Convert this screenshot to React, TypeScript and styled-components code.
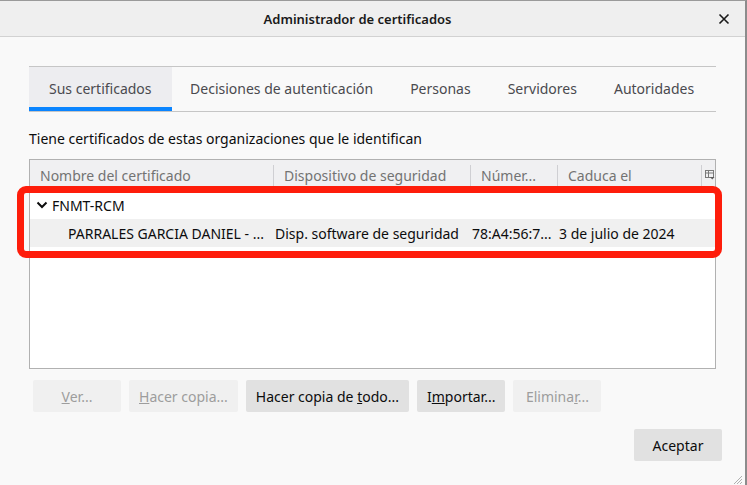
import React from "react";
import styled, { createGlobalStyle } from "styled-components";

const GlobalStyle = createGlobalStyle`
  html, body {
    margin: 0;
    padding: 0;
    background: #f9f9f9;
  }
  body {
    font-family: "Noto Sans", "Open Sans", sans-serif;
    font-size: 14px;
    color: #0c0c0d;
  }
`;

const Window = styled.div`
  position: relative;
  width: 747px;
  height: 485px;
  box-sizing: border-box;
  border-top: 1px solid #9a9a9a;
  border-right: 2px solid #8c8c8c;
  background: #f9f9f9;
  display: flex;
  flex-direction: column;
  overflow: hidden;
`;

const TitleBar = styled.div`
  height: 35px;
  flex: none;
  background: #efefef;
  border-bottom: 1px solid #d2d2d2;
  display: flex;
  align-items: center;
  justify-content: center;
  padding-right: 30px;
  position: relative;
`;

const Title = styled.span`
  font-size: 13px;
  font-weight: 600;
  color: #1a1a1a;
`;

const CloseButton = styled.button`
  position: absolute;
  right: 14px;
  top: 11px;
  width: 14px;
  height: 14px;
  border: none;
  padding: 0;
  background: none;
  display: flex;
`;

const Content = styled.div`
  flex: 1;
  padding: 29px 29px 0 29px;
  display: flex;
  flex-direction: column;
`;

const TabStrip = styled.div`
  display: flex;
  border-top: 1px solid #c6c6c6;
  border-bottom: 1px solid #c6c6c6;
`;

const Tab = styled.div<{ $selected?: boolean }>`
  flex: none;
  height: 44px;
  box-sizing: border-box;
  padding: 0 ${(p) => (p.$selected ? "20px" : "18.5px")} 2px;
  display: flex;
  align-items: center;
  white-space: nowrap;
  color: #4a4a4f;
  font-size: 14px;
  background: ${(p) => (p.$selected ? "#ededf0" : "transparent")};
  box-shadow: ${(p) => (p.$selected ? "inset 0 -4px 0 #0a84ff" : "none")};
`;

const Label = styled.div`
  margin-top: 17px;
  line-height: 20px;
  font-size: 14px;
`;

const Tree = styled.div`
  margin-top: 10px;
  height: 210px;
  box-sizing: border-box;
  border: 1px solid #b1b1b1;
  background: #ffffff;
  display: flex;
  flex-direction: column;
`;

const columns = "243px 197px 87px 144px 1fr";

const HeaderRow = styled.div`
  display: grid;
  grid-template-columns: ${columns};
  height: 30px;
  background: #f0f0f2;
  border-bottom: 1px solid #d7d7db;
`;

const HeaderCell = styled.div<{ $first?: boolean }>`
  display: flex;
  align-items: center;
  padding-left: ${(p) => (p.$first ? "10px" : "11px")};
  color: #737373;
  font-size: 14px;
  white-space: nowrap;
  overflow: hidden;
  position: relative;
  &::before {
    content: ${(p) => (p.$first ? "none" : "''")};
    position: absolute;
    left: 0;
    top: 5px;
    bottom: 4px;
    width: 1px;
    background: #cfcfd3;
  }
`;

const PickerCell = styled(HeaderCell)`
  padding-left: 4px;
`;

const Row = styled.div<{ $shaded?: boolean }>`
  display: grid;
  grid-template-columns: ${columns};
  height: 28px;
  align-items: center;
  background: ${(p) => (p.$shaded ? "#f0f0f0" : "#ffffff")};
  font-size: 14px;
  white-space: nowrap;
`;

const Cell = styled.div<{ $indent?: number }>`
  padding-left: ${(p) => p.$indent ?? 2}px;
  overflow: hidden;
  display: flex;
  align-items: center;
  gap: 4px;
`;

const ButtonRow = styled.div`
  display: flex;
  gap: 8px;
  margin-top: 11px;
  padding-left: 4px;
`;

const Button = styled.button<{ $disabled?: boolean }>`
  height: 32px;
  min-width: 88px;
  padding: 0 10px;
  border: none;
  border-radius: 2px;
  font-family: "Noto Sans", "Open Sans", sans-serif;
  font-size: 14px;
  white-space: nowrap;
  background: ${(p) => (p.$disabled ? "#f0f0f0" : "#e1e1e1")};
  color: ${(p) => (p.$disabled ? "#9d9d9d" : "#0c0c0d")};
`;

const Footer = styled.div`
  display: flex;
  justify-content: flex-end;
  margin-top: 17px;
  margin-right: -6px;
`;

const Highlight = styled.div`
  position: absolute;
  left: 17px;
  top: 185px;
  width: 705px;
  height: 72px;
  box-sizing: border-box;
  border: 7px solid #fe1d0b;
  border-radius: 9px;
  pointer-events: none;
`;

const Grip = styled.svg`
  position: absolute;
  right: 2px;
  bottom: 0;
`;

const Chevron = () => (
  <svg width="12" height="8" viewBox="0 0 12 8">
    <path d="M1.5 1.5 L6 6 L10.5 1.5" fill="none" stroke="#0c0c0d" strokeWidth="2" />
  </svg>
);

const ColumnPicker = () => (
  <svg width="10" height="10" viewBox="0 0 10 10">
    <rect x="0.5" y="0.5" width="8" height="7" fill="none" stroke="#7a7a7a" />
    <line x1="0.5" y1="3" x2="8.5" y2="3" stroke="#7a7a7a" />
    <line x1="3.5" y1="0.5" x2="3.5" y2="7.5" stroke="#7a7a7a" />
    <path d="M5 7 L9.5 7 L7.25 9.5 Z" fill="#5a5a5a" />
  </svg>
);

const App: React.FC = () => {
  return (
    <>
      <GlobalStyle />
      <Window>
        <TitleBar>
          <Title>Administrador de certificados</Title>
          <CloseButton aria-label="Cerrar">
            <svg width="14" height="14" viewBox="0 0 14 14">
              <path d="M2.5 2.5 L11.5 11.5 M11.5 2.5 L2.5 11.5" stroke="#1a1a1a" strokeWidth="1.6" />
            </svg>
          </CloseButton>
        </TitleBar>
        <Content>
          <TabStrip>
            <Tab $selected>Sus certificados</Tab>
            <Tab>Decisiones de autenticación</Tab>
            <Tab>Personas</Tab>
            <Tab>Servidores</Tab>
            <Tab>Autoridades</Tab>
          </TabStrip>
          <Label>Tiene certificados de estas organizaciones que le identifican</Label>
          <Tree>
            <HeaderRow>
              <HeaderCell $first>Nombre del certificado</HeaderCell>
              <HeaderCell>Dispositivo de seguridad</HeaderCell>
              <HeaderCell>Númer...</HeaderCell>
              <HeaderCell>Caduca el</HeaderCell>
              <PickerCell>
                <ColumnPicker />
              </PickerCell>
            </HeaderRow>
            <Row>
              <Cell $indent={6}>
                <Chevron />
                FNMT-RCM
              </Cell>
            </Row>
            <Row $shaded>
              <Cell $indent={38}>PARRALES GARCIA DANIEL - ...</Cell>
              <Cell>Disp. software de seguridad</Cell>
              <Cell>78:A4:56:7...</Cell>
              <Cell>3 de julio de 2024</Cell>
            </Row>
          </Tree>
          <ButtonRow>
            <Button $disabled>
              <u>V</u>er...
            </Button>
            <Button $disabled>
              <u>H</u>acer copia...
            </Button>
            <Button>
              Hacer copia de <u>t</u>odo...
            </Button>
            <Button>
              I<u>m</u>portar...
            </Button>
            <Button $disabled>
              Elimina<u>r</u>...
            </Button>
          </ButtonRow>
          <Footer>
            <Button>Aceptar</Button>
          </Footer>
        </Content>
        <Highlight />
        <Grip width="12" height="12" viewBox="0 0 12 12">
          <path d="M11 3 L3 11 M11 6 L6 11 M11 9 L9 11" stroke="#b0b0b0" strokeWidth="1" />
        </Grip>
      </Window>
    </>
  );
};

export default App;
